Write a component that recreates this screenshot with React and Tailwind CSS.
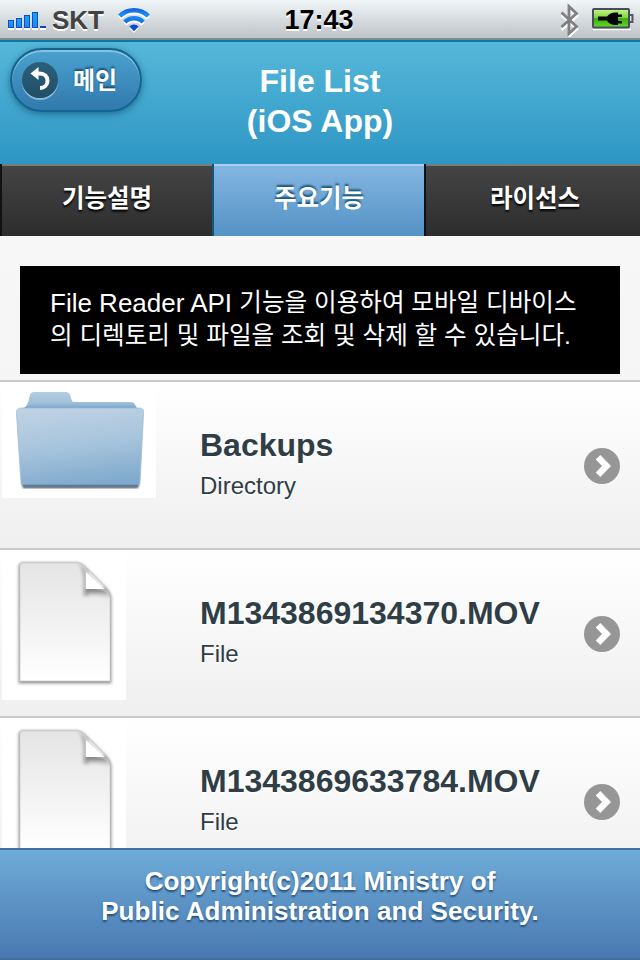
import React from "react";

const files = [
  { name: "Backups", kind: "Directory" },
  { name: "M1343869134370.MOV", kind: "File" },
  { name: "M1343869633784.MOV", kind: "File" },
];

function Signal() {
  return (
    <svg width="40" height="20" viewBox="0 0 40 20" className="shrink-0">
      <defs>
        <linearGradient id="bar" x1="0" y1="0" x2="0" y2="1">
          <stop offset="0" stopColor="#1aa3f5" />
          <stop offset="1" stopColor="#1a86f5" />
        </linearGradient>
      </defs>
      <path d="M0 19h6M8 19h6M16 19h6M24 19h6M32 19h6" stroke="#fff" strokeWidth="2" />
      <g fill="url(#bar)" stroke="#0b4fc0" strokeWidth="1">
        <rect x="0.5" y="10.5" width="5" height="7" />
        <rect x="8.5" y="8.5" width="5" height="9" />
        <rect x="16.5" y="5.5" width="5" height="12" />
        <rect x="24.5" y="2.5" width="5" height="15" />
      </g>
      <rect x="32" y="16" width="6" height="2" fill="#1245b5" />
    </svg>
  );
}

function Wifi() {
  return (
    <svg width="34" height="27" viewBox="0 0 34 27" className="shrink-0">
      <defs>
        <linearGradient id="wifi" x1="0" y1="0" x2="0" y2="27" gradientUnits="userSpaceOnUse">
          <stop offset="0" stopColor="#1453d8" />
          <stop offset="0.3" stopColor="#1a8ef6" />
          <stop offset="1" stopColor="#0a3fc4" />
        </linearGradient>
      </defs>
      <g transform="translate(0 2)" fill="none" stroke="#fff" strokeWidth="4.400">
        <path d="M2.7 9a20.500 20.500 0 0 1 28.6 0" />
        <path d="M7.800 15a13 13 0 0 1 18.400 0" />
        <path d="M12.6 19.2a6.2 6.2 0 0 1 8.8 0L17 24z" fill="#fff" stroke="none" />
      </g>
      <g fill="none" stroke="url(#wifi)" strokeWidth="4.400">
        <path d="M2.7 9a20.500 20.500 0 0 1 28.6 0" />
        <path d="M7.800 15a13 13 0 0 1 18.400 0" />
        <path d="M12.4 19.400a6.400 6.400 0 0 1 9.200 0L17 24.200z" fill="#0b49cf" stroke="none" />
      </g>
    </svg>
  );
}

function Bluetooth() {
  return (
    <svg width="22" height="34" viewBox="0 0 22 34" className="shrink-0">
      <path d="M2 11L17.500 25L10 32V6L17.500 12L2 26" transform="translate(0.500 1)" fill="none" stroke="#fff" strokeWidth="2.6" />
      <path d="M2.500 9.500L17.500 23.500L10 30.500V3.500L17.500 10.500L2.500 24" fill="none" stroke="#808080" strokeWidth="2.8" />
    </svg>
  );
}

function Battery() {
  return (
    <svg width="44" height="24" viewBox="0 0 44 24" className="shrink-0">
      <defs>
        <linearGradient id="cell" x1="0" y1="0" x2="0" y2="1">
          <stop offset="0" stopColor="#c9f58c" />
          <stop offset="0.48" stopColor="#7bd53c" />
          <stop offset="0.52" stopColor="#3faa0c" />
          <stop offset="1" stopColor="#67dc2c" />
        </linearGradient>
      </defs>
      <path d="M1 21.500h38" stroke="#fff" strokeWidth="1.500" />
      <rect x="1" y="1" width="36" height="18.500" rx="1" fill="url(#cell)" stroke="#4a4b5d" strokeWidth="2" />
      <path d="M38 7h2.500v7H38" fill="none" stroke="#555666" strokeWidth="2" />
      <path d="M6 8.500h9c2-2.500 5-4 8-4h3v2h4v2.500h-4v4h4v2.500h-4v1.500h-3c-3 0-6-1-8-4.500H6z" fill="#050805" />
    </svg>
  );
}

function Folder() {
  return (
    <svg width="154" height="112" viewBox="0 0 154 112" className="block bg-white">
      <defs>
        <linearGradient id="front" x1="0.25" y1="0" x2="0.45" y2="1">
          <stop offset="0" stopColor="#bfd2e4" />
          <stop offset="0.5" stopColor="#a7c4dc" />
          <stop offset="1" stopColor="#80aacd" />
        </linearGradient>
        <linearGradient id="back" x1="0" y1="0" x2="0" y2="1">
          <stop offset="0" stopColor="#b5cde0" />
          <stop offset="0.65" stopColor="#a0c1dc" />
          <stop offset="1" stopColor="#7fa9cc" />
        </linearGradient>
        <filter id="soft" x="-10%" y="-10%" width="120%" height="120%">
          <feGaussianBlur stdDeviation="1.300" />
        </filter>
      </defs>
      <path d="M20 97h117l-1 5H21z" fill="#3c454c" filter="url(#soft)" />
      <path d="M22 22c3-2 4-5 5-9 1-6 2-7 6-7h29c5 0 6 1 7 6 1 3 1 4 4 4h55c5 0 5 3 7 6z" fill="url(#back)" />
      <path d="M20 23c4-3 6-2 10-2h95c5 0 8 0 10 3z" fill="#6f9fc8" opacity=".7" />
      <path d="M20 22h117c4 0 5 2 4.500 6l-3.500 68c0 3-2 4-4 4H23c-3 0-4-1-4-4l-4.500-68c-.5-4 1-6 5.500-6z" fill="url(#front)" stroke="#9dbcd5" strokeWidth="0.800" />
      <path d="M21 99.500h115" stroke="#567a99" strokeWidth="1.500" />
    </svg>
  );
}

function Page() {
  return (
    <svg width="124" height="144" viewBox="0 0 124 144" className="block bg-white">
      <defs>
        <linearGradient id="sheet" x1="0" y1="0" x2="0" y2="1">
          <stop offset="0" stopColor="#e4e4e4" />
          <stop offset="1" stopColor="#ffffff" />
        </linearGradient>
        <linearGradient id="fold" x1="0" y1="0" x2="0" y2="1">
          <stop offset="0" stopColor="#555" />
          <stop offset="1" stopColor="#d0d0d0" stopOpacity="0" />
        </linearGradient>
        <filter id="blur" x="-20%" y="-20%" width="140%" height="140%">
          <feGaussianBlur stdDeviation="1.400" />
        </filter>
        <clipPath id="outline">
          <path d="M17 10q0-4 4-4h53q5 0 9 4l21 21q5 5 5 11v84H17z" />
        </clipPath>
      </defs>
      <path d="M17 11q0-4 4-4h53q5 0 9 4l21 21q5 5 5 11v84H17z" fill="#777" stroke="#bbb" strokeWidth="1.500" filter="url(#blur)" />
      <path d="M18 10q0-3 3-3h53q5 0 9 4l20 20q5 5 5 11v83H18z" fill="url(#sheet)" stroke="#cfcfcf" strokeWidth="0.800" />
      <g clipPath="url(#outline)">
        <path d="M76 7q6 6 5 25v8h5V14z" fill="#999" opacity=".6" filter="url(#blur)" />
        <path d="M84 32h18q6 4 7 9v3q-10-6-25-4z" fill="url(#fold)" filter="url(#blur)" />
      </g>
      <path d="M78 8q5 4 5 11v14q14-1 24 5L84 14z" fill="#cfcfcf" opacity=".5" />
      <path d="M84 16L102.500 33H84z" fill="#fff" />
    </svg>
  );
}

function Chevron() {
  return (
    <svg width="36" height="36" viewBox="0 0 36 36" className="shrink-0">
      <circle cx="18" cy="18" r="18" fill="#969696" />
      <path d="M14 9.300L22.500 18L14 26.700" fill="none" stroke="#fff" strokeWidth="6.400" />
    </svg>
  );
}

function Ko({ children }) {
  return <span className="relative -top-px text-[24.600px]">{children}</span>;
}

export default function App() {
  return (
    <div className="flex h-[960px] w-[640px] flex-col overflow-hidden bg-[#f6f6f6] font-['Liberation_Sans','Noto_Sans_CJK_KR',sans-serif]">
      <div className="grid h-10 shrink-0 grid-cols-3 items-center border-b-2 border-[#858a8b] bg-linear-to-b from-[#f1f6f9] to-[#bdc3c6]">
        <div className="flex items-center pl-2">
          <Signal />
          <span className="ml-1 text-[26px] leading-10 font-bold text-[#434343] [text-shadow:0_2px_0_#fff]">SKT</span>
          <span className="ml-[13px]"><Wifi /></span>
        </div>
        <div className="pr-[2px] text-center text-[27px] leading-10 font-bold text-black [text-shadow:0_2px_0_#fff]">17:43</div>
        <div className="flex items-center justify-end gap-[11px] pr-1">
          <Bluetooth />
          <Battery />
        </div>
      </div>

      <header className="grid h-[124px] shrink-0 grid-cols-[213px_1fr_213px] items-start border-t-2 border-[#0878ad] bg-linear-to-b from-[#55b8d9] to-[#2d96c4]">
        <button className="mt-[6px] ml-[10px] flex h-16 w-[132px] items-center rounded-full border-2 border-[#11658f] bg-linear-to-b from-[#4ba2ce] to-[#3179ae] pl-[10px] shadow-[0_2px_7px_rgba(0,50,80,.5),inset_0_2px_0_rgba(255,255,255,.35)]">
          <span className="flex size-9 items-center justify-center rounded-full bg-linear-to-b from-[#2b5f7a] to-[#214f68] shadow-[0_2px_0_rgba(255,255,255,.45)]">
            <svg width="36" height="36" viewBox="0 0 36 36">
              <path d="M13 11.500h4.500c5 0 8 3 8 7.200s-3 7.300-7.500 7.300" fill="none" stroke="#fff" strokeWidth="4" />
              <path d="M8.500 11.500L16.500 5V18z" fill="#fff" />
            </svg>
          </span>
          <span className="mt-[2px] ml-[15px] text-[24px] leading-10 font-bold text-white [text-shadow:0_-2px_2px_#145072]">메인</span>
        </button>
        <h1 className="pt-[19px] text-center text-[32px] leading-10 font-bold text-white">File List<br />(iOS App)</h1>
      </header>

      <nav className="grid h-[72px] shrink-0 grid-cols-[212px_212px_216px] text-center text-[24.500px] leading-[70px] font-bold text-white">
        <div className="border-l-2 border-[#111] bg-linear-to-b from-[#454545] to-[#2d2d2d] shadow-[inset_0_2px_0_#7b7b7b] [text-shadow:0_2px_2px_#000]">기능설명</div>
        <div className="border-l-2 border-[#155678] bg-linear-to-b from-[#85b7e3] to-[#5393c5] shadow-[inset_0_2px_0_#aacff0] [text-shadow:0_-2px_2px_#145072]">주요기능</div>
        <div className="border-l-2 border-[#111] bg-linear-to-b from-[#454545] to-[#2d2d2d] pl-1 shadow-[inset_0_2px_0_#7b7b7b] [text-shadow:0_2px_2px_#000]">라이선스</div>
      </nav>

      <main className="flex min-h-0 flex-1 flex-col overflow-hidden bg-linear-to-b from-[#f7f7f7] to-[#f1f1f1]">
        <p className="mx-5 mt-[30px] mb-[6px] h-[108px] shrink-0 bg-black pt-[21px] pl-[30px] text-[26px] leading-8 whitespace-nowrap text-white">
          File Reader API <Ko>기능을 이용하여 모바일 디바이스</Ko><br />
          <Ko>의 디렉토리 및 파일을 조회 및 삭제 할 수 있습니다.</Ko>
        </p>
        <ul>
          {files.map((file) => (
            <li key={file.name} className="flex h-[168px] border-t-2 border-[#c9c9c9] bg-linear-to-b from-white to-[#efefef] pr-5 text-[#2f3e46] [text-shadow:0_2px_0_#fff]">
              <div className="w-[200px] shrink-0 pl-[2px]">
                <div className={file.kind === "Directory" ? "pt-1" : "pt-[6px]"}>
                  {file.kind === "Directory" ? <Folder /> : <Page />}
                </div>
              </div>
              <div className="flex-1">
                <h3 className="mt-[43px] text-[32px] leading-10 font-bold">{file.name}</h3>
                <p className="mt-[6px] text-[24px] leading-[30px]">{file.kind}</p>
              </div>
              <div className="flex items-center pt-[2px]"><Chevron /></div>
            </li>
          ))}
        </ul>
      </main>

      <footer className="h-28 shrink-0 border-y-2 border-[#456f9f] bg-linear-to-b from-[#6eacd9] to-[#4a79b0] pt-4 text-center text-[26px] font-bold tracking-[0.04px] text-white">
        <p className="h-[60px] leading-[30px] [text-shadow:0_2px_2px_#254f7a]">Copyright(c)2011 Ministry of<br />Public Administration and Security.</p>
      </footer>
    </div>
  );
}
